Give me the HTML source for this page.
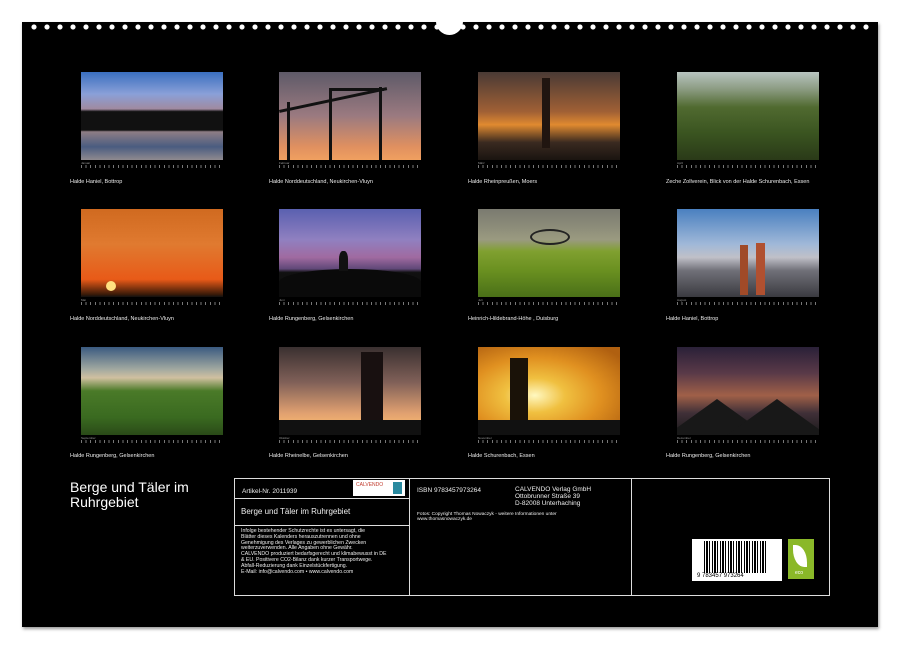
<!DOCTYPE html>
<html><head><meta charset="utf-8"><style>
*{margin:0;padding:0;box-sizing:border-box}
body{width:899px;height:648px;background:#fff;position:relative;overflow:hidden;font-family:"Liberation Sans",sans-serif}
.bg{position:absolute;left:22px;top:22px;width:856px;height:605px;background:#000;box-shadow:1px 2px 3px #999}
.dots{position:absolute;left:30px;top:23px;width:840px;height:8px;background:radial-gradient(circle at 4px 4px,#fff 2.3px,transparent 2.8px) 0 0/13px 8px repeat-x}
.notch{position:absolute;left:436px;top:8px;width:27px;height:27px;border-radius:50%;background:#fff}
.ph{position:absolute;width:142px;height:88px;overflow:hidden}
.cal{position:absolute;width:142px;height:10px;font-size:3px;color:#999}
.cal i{position:absolute;left:0;top:4px;width:142px;height:3px;background:repeating-linear-gradient(90deg,#777 0 1px,transparent 1px 4.6px)}
.cap{position:absolute;font-size:5.5px;color:#eee;white-space:nowrap}
.b{position:absolute;border:1px solid #ddd}
.t{position:absolute;color:#eee;white-space:nowrap}
.s{position:absolute;background:#111}
</style></head><body>
<div class="bg"></div>
<div class="dots"></div>
<div class="notch"></div>

<!-- row1 -->
<div class="ph" style="left:81px;top:72px;background:linear-gradient(#3a6fbf 0%,#8aa0d8 25%,#a08aa0 42%,#111 45%,#111 66%,#8e7d85 68%,#4a5c80 85%,#8f8a8f 100%)"></div>
<div class="ph" style="left:279px;top:72px;background:linear-gradient(#5e5a68,#9b7a80 50%,#e09060 85%,#f0a060)">
 <div class="s" style="left:0;top:38px;width:110px;height:3px;transform:rotate(-12deg);transform-origin:0 0"></div>
 <div class="s" style="left:8px;top:30px;width:3px;height:58px"></div>
 <div class="s" style="left:50px;top:18px;width:3px;height:70px"></div>
 <div class="s" style="left:100px;top:15px;width:3px;height:73px"></div>
 <div class="s" style="left:50px;top:16px;width:55px;height:3px"></div>
</div>
<div class="ph" style="left:478px;top:72px;background:linear-gradient(#4a3a35,#a06035 45%,#e08a30 60%,#3a2a20 80%,#1a1410)">
 <div class="s" style="left:64px;top:6px;width:8px;height:70px;background:#201510"></div>
</div>
<div class="ph" style="left:677px;top:72px;background:linear-gradient(#b8c4c0,#8a9a80 20%,#506a30 40%,#3a5420 70%,#2a3a18)"></div>
<!-- row2 -->
<div class="ph" style="left:81px;top:209px;background:linear-gradient(#d06a20,#e07a30 40%,#e85a18 80%,#3a1a08 97%,#111)">
 <div style="position:absolute;left:25px;top:72px;width:10px;height:10px;border-radius:50%;background:#ffe080"></div>
</div>
<div class="ph" style="left:279px;top:209px;background:linear-gradient(#5a60b0,#9080c0 35%,#a06aa0 55%,#604878 68%,#111 72%,#0a0a0a)">
 <div class="s" style="left:0;top:60px;width:142px;height:40px;border-radius:60% 60% 0 0/40% 40% 0 0;background:#0a0a0a"></div>
 <div class="s" style="left:60px;top:42px;width:9px;height:20px;border-radius:40% 40% 0 0"></div>
</div>
<div class="ph" style="left:478px;top:209px;background:linear-gradient(#7a7a70,#9a9a80 35%,#80a030 48%,#6a9020 70%,#4a7018)">
 <div style="position:absolute;left:52px;top:20px;width:40px;height:16px;border:2px solid #222;border-radius:50%"></div>
</div>
<div class="ph" style="left:677px;top:209px;background:linear-gradient(#4a80c0,#a0b8d8 40%,#c0c0c8 55%,#707078 70%,#3a3a40)">
 <div style="position:absolute;left:63px;top:36px;width:8px;height:50px;background:#a04a28"></div>
 <div style="position:absolute;left:79px;top:34px;width:9px;height:52px;background:#b05030"></div>
</div>
<!-- row3 -->
<div class="ph" style="left:81px;top:347px;background:linear-gradient(#3a5a80,#a0a8a0 25%,#d0c0a0 35%,#4a7a28 50%,#3a6a20 80%,#2a4a18)"></div>
<div class="ph" style="left:279px;top:347px;background:linear-gradient(#3a3030,#806058 40%,#e0a070 75%,#f0b070 85%,#111)">
 <div class="s" style="left:82px;top:5px;width:22px;height:75px;background:#181010"></div>
 <div class="s" style="left:0;top:73px;width:142px;height:15px"></div>
</div>
<div class="ph" style="left:478px;top:347px;background:radial-gradient(ellipse at 40% 55%,#fff8c0 0,#f0c040 25%,#e09020 55%,#b06010 90%);">
 <div class="s" style="left:32px;top:11px;width:18px;height:64px;background:#1a1208"></div>
 <div class="s" style="left:0;top:73px;width:142px;height:15px"></div>
</div>
<div class="ph" style="left:677px;top:347px;background:linear-gradient(#2a2038,#5a3a48 30%,#a06048 55%,#403038 75%,#1a1a1a)">
 <div style="position:absolute;left:-10px;top:52px;width:0;height:0;border-left:50px solid transparent;border-right:50px solid transparent;border-bottom:36px solid #181818"></div>
 <div style="position:absolute;left:50px;top:52px;width:0;height:0;border-left:50px solid transparent;border-right:50px solid transparent;border-bottom:36px solid #181818"></div>
</div>

<!-- calendars -->
<div class="cal" style="left:81px;top:161px">Januar<i></i></div>
<div class="cal" style="left:279px;top:161px">Februar<i></i></div>
<div class="cal" style="left:478px;top:161px">März<i></i></div>
<div class="cal" style="left:677px;top:161px">April<i></i></div>
<div class="cal" style="left:81px;top:298px">Mai<i></i></div>
<div class="cal" style="left:279px;top:298px">Juni<i></i></div>
<div class="cal" style="left:478px;top:298px">Juli<i></i></div>
<div class="cal" style="left:677px;top:298px">August<i></i></div>
<div class="cal" style="left:81px;top:436px">September<i></i></div>
<div class="cal" style="left:279px;top:436px">Oktober<i></i></div>
<div class="cal" style="left:478px;top:436px">November<i></i></div>
<div class="cal" style="left:677px;top:436px">Dezember<i></i></div>

<div class="cap" style="left:70px;top:179px">Halde Haniel, Bottrop</div>
<div class="cap" style="left:269px;top:179px">Halde Norddeutschland, Neukirchen-Vluyn</div>
<div class="cap" style="left:468px;top:179px">Halde Rheinpreußen, Moers</div>
<div class="cap" style="left:666px;top:179px">Zeche Zollverein, Blick von der Halde Schurenbach, Essen</div>
<div class="cap" style="left:70px;top:316px">Halde Norddeutschland, Neukirchen-Vluyn</div>
<div class="cap" style="left:269px;top:316px">Halde Rungenberg, Gelsenkirchen</div>
<div class="cap" style="left:468px;top:316px">Heinrich-Hildebrand-Höhe , Duisburg</div>
<div class="cap" style="left:666px;top:316px">Halde Haniel, Bottrop</div>
<div class="cap" style="left:70px;top:453px">Halde Rungenberg, Gelsenkirchen</div>
<div class="cap" style="left:269px;top:453px">Halde Rheinelbe, Gelsenkirchen</div>
<div class="cap" style="left:468px;top:453px">Halde Schurenbach, Essen</div>
<div class="cap" style="left:666px;top:453px">Halde Rungenberg, Gelsenkirchen</div>

<div class="t" style="left:70px;top:480px;font-size:14px;line-height:15px;color:#fff">Berge und Täler im<br>Ruhrgebiet</div>

<!-- info box -->
<div class="b" style="left:234px;top:478px;width:596px;height:118px"></div>
<div class="b" style="left:409px;top:478px;width:1px;height:118px;border-width:0 0 0 1px"></div>
<div class="b" style="left:631px;top:478px;width:1px;height:118px;border-width:0 0 0 1px"></div>
<div class="b" style="left:234px;top:498px;width:176px;height:1px;border-width:1px 0 0 0"></div>
<div class="b" style="left:234px;top:525px;width:176px;height:1px;border-width:1px 0 0 0"></div>
<div class="t" style="left:242px;top:488px;font-size:6.5px">Artikel-Nr. 2011939</div>
<div style="position:absolute;left:353px;top:480px;width:52px;height:16px;background:#fff"></div>
<div class="t" style="left:356px;top:482px;font-size:5px;color:#c0392b">CALVENDO</div>
<div style="position:absolute;left:393px;top:482px;width:9px;height:12px;background:#2a8aa0"></div>
<div class="t" style="left:241px;top:507px;font-size:8px">Berge und Täler im Ruhrgebiet</div>
<div class="t" style="left:241px;top:529px;font-size:5.2px;line-height:5.8px">Infolge bestehender Schutzrechte ist es untersagt, die<br>Blätter dieses Kalenders herauszutrennen und ohne<br>Genehmigung des Verlages zu gewerblichen Zwecken<br>weiterzuverwenden. Alle Angaben ohne Gewähr.<br>CALVENDO produziert bedarfsgerecht und klimabewusst in DE<br>&amp; EU. Positivere CO2-Bilanz dank kurzer Transportwege.<br>Abfall-Reduzierung dank Einzelstückfertigung.<br>E-Mail: info@calvendo.com • www.calvendo.com</div>
<div class="t" style="left:417px;top:487px;font-size:6.5px">ISBN 9783457973264</div>
<div class="t" style="left:515px;top:486px;font-size:6.5px;line-height:7px">CALVENDO Verlag GmbH<br>Ottobrunner Straße 39<br>D-82008 Unterhaching</div>
<div class="t" style="left:417px;top:512px;font-size:4.8px;line-height:5.2px">Fotos: Copyright Thomas Nowaczyk - weitere Informationen unter<br>www.thomasnowaczyk.de</div>
<div style="position:absolute;left:692px;top:539px;width:90px;height:42px;background:#fff"></div>
<div style="position:absolute;left:704px;top:541px;width:64px;height:32px;background:repeating-linear-gradient(90deg,#000 0 1px,#fff 1px 2px,#000 2px 4px,#fff 4px 5px,#000 5px 6px,#fff 6px 8px)"></div>
<div class="t" style="left:697px;top:573px;font-size:6px;color:#000">9 783457 973264</div>
<div style="position:absolute;left:788px;top:539px;width:26px;height:40px;background:#8ab828"></div>
<div style="position:absolute;left:793px;top:545px;width:14px;height:22px;background:#fff;border-radius:0 80% 0 80%"></div>
<div class="t" style="left:795px;top:570px;font-size:5px;color:#fff">eco</div>
</body></html>
